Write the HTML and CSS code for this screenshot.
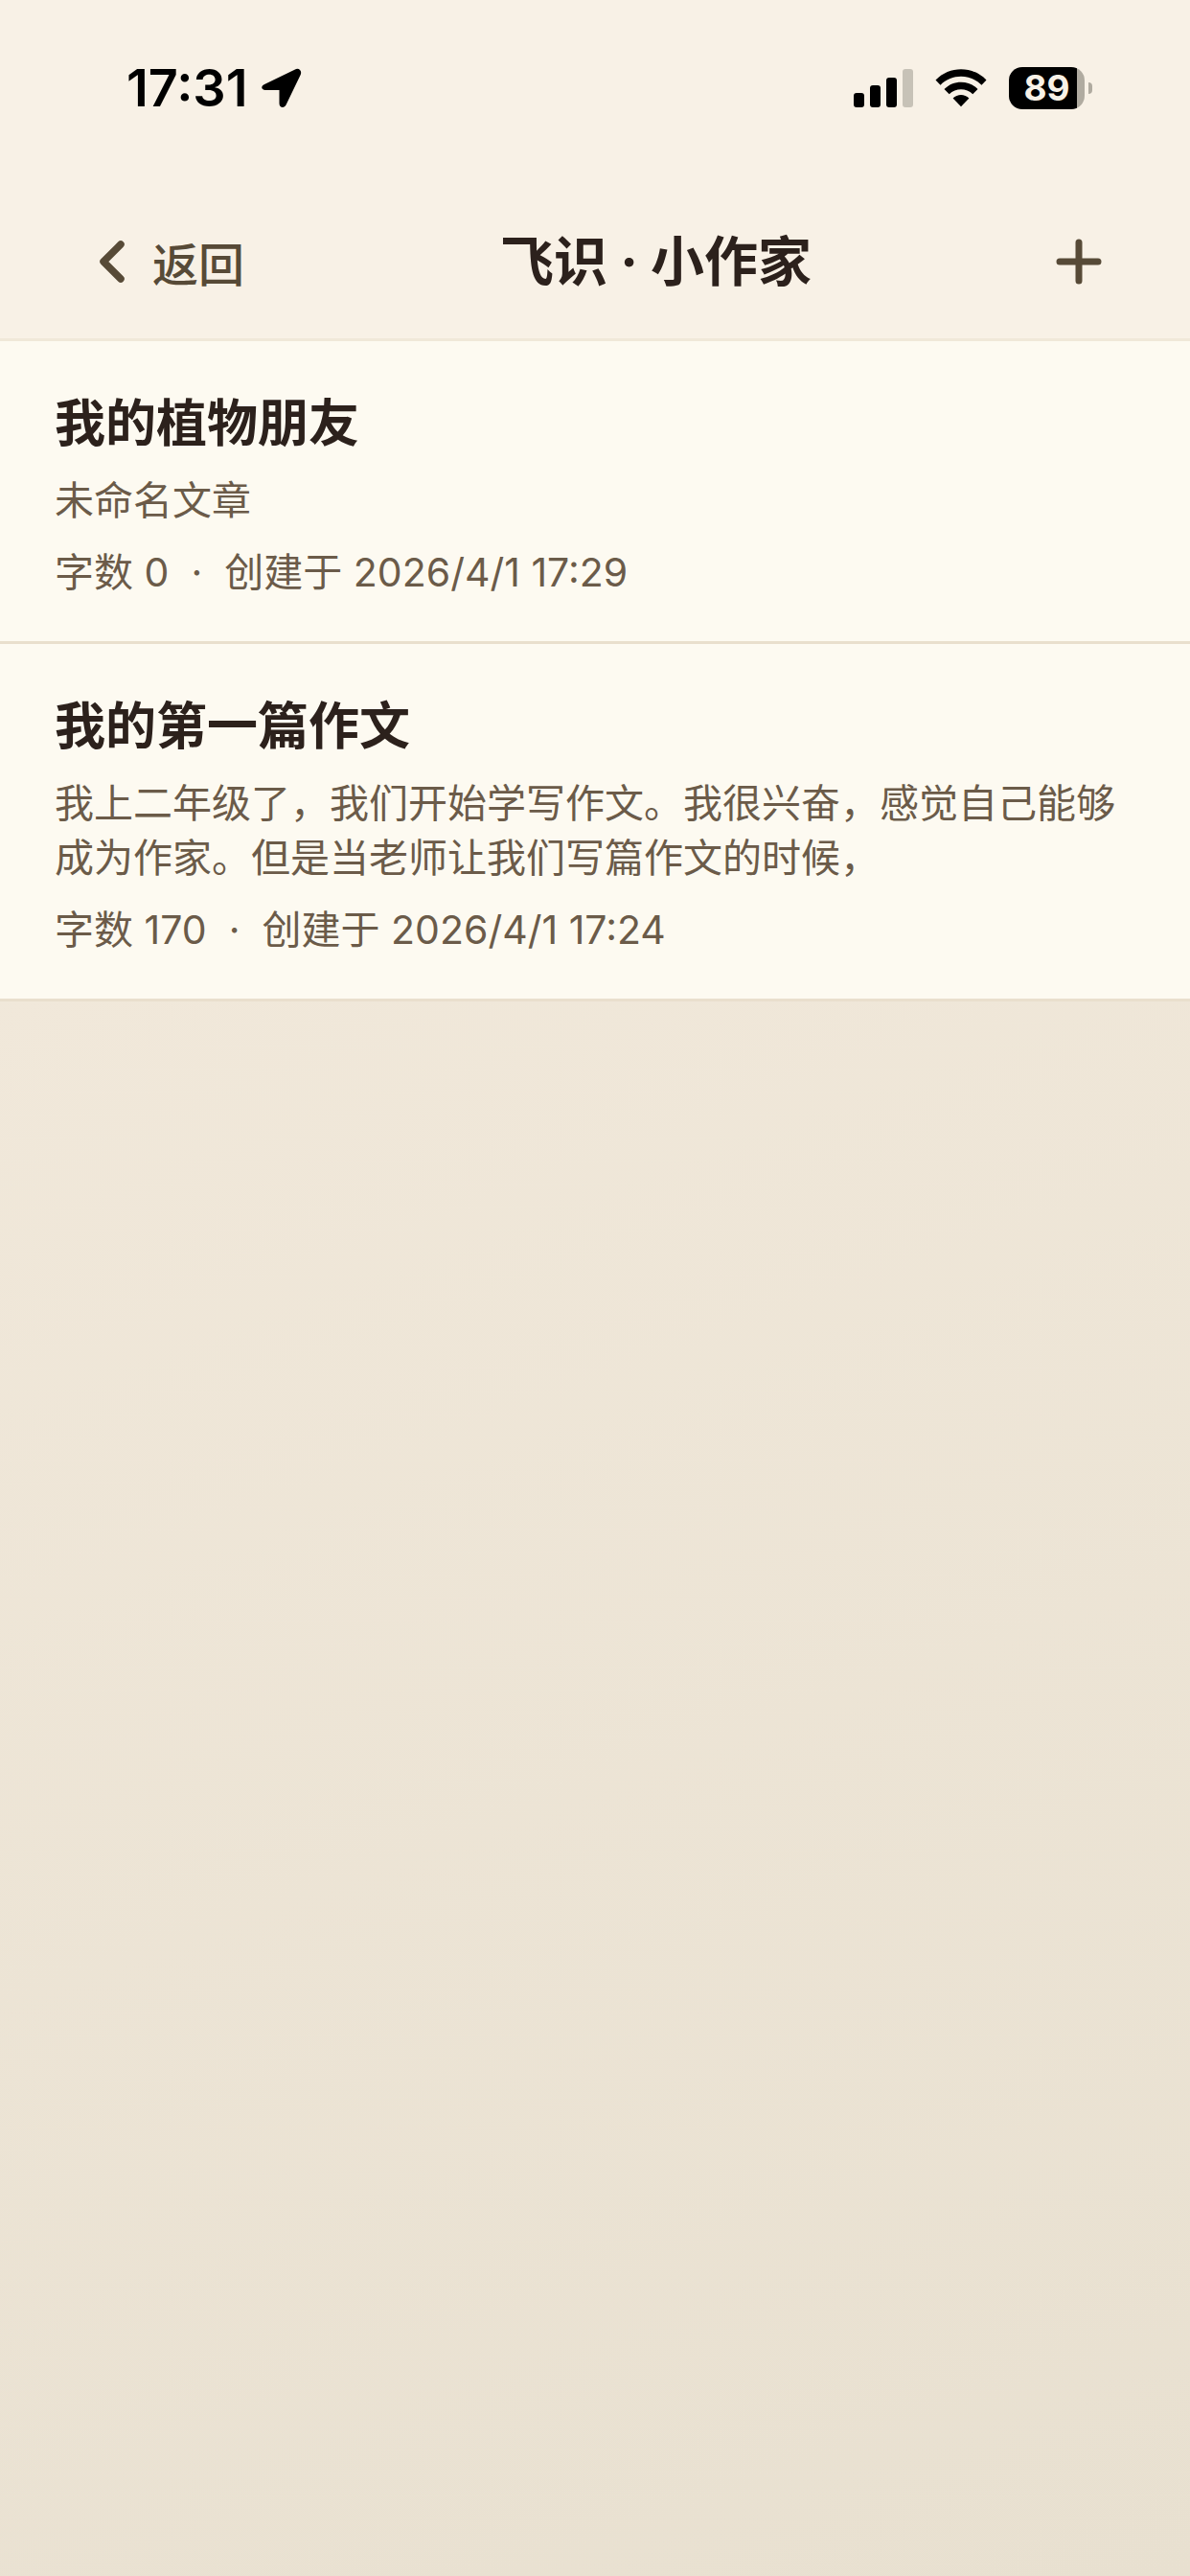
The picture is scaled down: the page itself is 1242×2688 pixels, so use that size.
FILE: index.html
```html
<!DOCTYPE html>
<html lang="zh-CN">
<head>
  <meta charset="UTF-8">
  <meta name="viewport" content="width=device-width, initial-scale=1">
  <title>飞识 · 小作家</title>
  <link rel="stylesheet" href="styles.css">
</head>
<body>

<header class="top">
  <!-- 状态栏 -->
  <div class="status-bar">
    <div class="status-left">
      <span class="time">17:31</span>
      <svg class="location" width="42" height="42" viewBox="0 0 42 42" aria-hidden="true">
        <path d="M3 17 L35 1.400 C39 -0.500 42.500 3 40.700 7 L25.500 38.500 C23.800 42.300 18.500 41.500 18.500 37 V23 H4 C-0.600 23 -1 18.800 3 17 Z"/>
      </svg>
    </div>
    <div class="status-right">
      <svg width="62" height="40" viewBox="0 0 62 40" aria-hidden="true">
        <rect x="0" y="25" width="11" height="15" rx="3"/>
        <rect x="17" y="17" width="11" height="23" rx="3"/>
        <rect x="34" y="9" width="11" height="31" rx="3"/>
        <rect x="51" y="0" width="11" height="40" rx="3" fill="#c7c2b7"/>
      </svg>
      <svg width="54" height="40" viewBox="0 0 54 40" aria-hidden="true">
        <path d="M0.500 11.500 C15 -3.600 39 -3.600 53.500 11.500 L48.500 16.700 C36.500 4.800 17.500 4.800 5.500 16.700 Z"/>
        <path d="M9.500 21 C19 11.200 35 11.200 44.500 21 L39.300 26.300 C32.500 19.500 21.500 19.500 14.700 26.300 Z"/>
        <path d="M18.600 30.500 C23.200 25.700 30.800 25.700 35.400 30.500 L27 39.300 Z"/>
      </svg>
      <div class="battery"><span>89</span></div>
    </div>
  </div>

  <!-- 导航 -->
  <nav class="nav">
    <button class="back-btn" type="button">
      <svg width="72" height="72" viewBox="0 0 24 24" aria-hidden="true">
        <path d="M15 6 L9 12 L15 18"/>
      </svg>
      返回
    </button>
    <h1>飞识 · 小作家</h1>
    <button class="add-btn" type="button" aria-label="新建">
      <svg width="72" height="72" viewBox="0 0 72 72" aria-hidden="true">
        <path d="M36 16 V56 M16 36 H56"/>
      </svg>
    </button>
  </nav>
</header>

<!-- 作文列表 -->
<main>
  <ul class="article-list">
    <li>
      <a class="article" href="#">
        <h2>我的植物朋友</h2>
        <p class="summary">未命名文章</p>
        <p class="meta">字数 0&nbsp; · &nbsp;创建于 2026/4/1 17:29</p>
      </a>
    </li>
    <li>
      <a class="article" href="#">
        <h2>我的第一篇作文</h2>
        <p class="summary">我上二年级了，我们开始学写作文。我很兴奋，感觉自己能够成为作家。但是当老师让我们写篇作文的时候，</p>
        <p class="meta">字数 170&nbsp; · &nbsp;创建于 2026/4/1 17:24</p>
      </a>
    </li>
  </ul>
</main>

</body>
</html>
```
FILE: styles.css
```css
* {
  margin: 0; padding: 0; box-sizing: border-box;
}

body {
  min-height: 100vh;
  font-family: Inter, "Noto Sans CJK SC", sans-serif;
  color: #2c211c;
  background: linear-gradient(160deg, #f5ecdf 0%, #e8e0d0 100%);
}

.top {
  background-color: #f8f1e6;
  border-bottom: 3px solid #f0e8d8;
}

/* 状态栏 */
.status-bar {
  display: flex;
  justify-content: space-between;
  align-items: center;
  height: 141px;
  padding: 43px 110px 0 132px;
  color: #000;
}

.status-left,
.status-right {
  display: flex;
  align-items: center;
}

.status-left {
  gap: 14px;
}

.status-right {
  gap: 23px;
}

.time {
  font-size: 54px;
  line-height: 56px;
  font-weight: 600;
}

.battery {
  position: relative;
  width: 79px;
  height: 44px;
  border-radius: 14px;
  background: linear-gradient(90deg, #000 90%, #b0aba0 90%);
  color: #f8f1e6;
  font-size: 37px;
  line-height: 44px;
  font-weight: 700;
  text-align: center;
}

.battery::after {
  content: "";
  position: absolute;
  top: 16px;
  right: -8px;
  width: 4px;
  height: 12px;
  border-radius: 0 4px 4px 0;
  background-color: #b0aba0;
}

/* 导航 */
.nav {
  display: flex;
  justify-content: space-between;
  align-items: center;
  padding: 84px 80px 32px 81px;
}

.nav button {
  display: flex;
  align-items: center;
  height: 96px;
  border: none;
  background: none;
  color: #574a37;
  font-family: inherit;
  font-size: 48px;
  font-weight: 500;
  cursor: pointer;
}

.nav .back-btn {
  gap: 6px;
  padding-right: 24px;
}

.nav svg {
  fill: none;
  stroke: currentColor;
  stroke-linecap: round;
  stroke-linejoin: round;
}

.back-btn svg {
  stroke-width: 2.5;
}

.add-btn svg {
  stroke-width: 7;
}

.nav h1 {
  font-size: 56px;
  line-height: 72px;
  font-weight: 700;
}

/* 列表 */
.article-list {
  list-style: none;
}

.article {
  display: block;
  padding: 50px 57px 48px;
  background-color: #fdfaf1;
  border-bottom: 3px solid #e9dfcd;
  color: #6b5b49;
  text-decoration: none;
}

.article h2 {
  margin-bottom: 16px;
  color: #2c211c;
  font-size: 53px;
  line-height: 72px;
  font-weight: 700;
}

.summary {
  margin-bottom: 22px;
  font-size: 41px;
  line-height: 57px;
}

.meta {
  font-size: 41px;
  line-height: 48px;
}
```
